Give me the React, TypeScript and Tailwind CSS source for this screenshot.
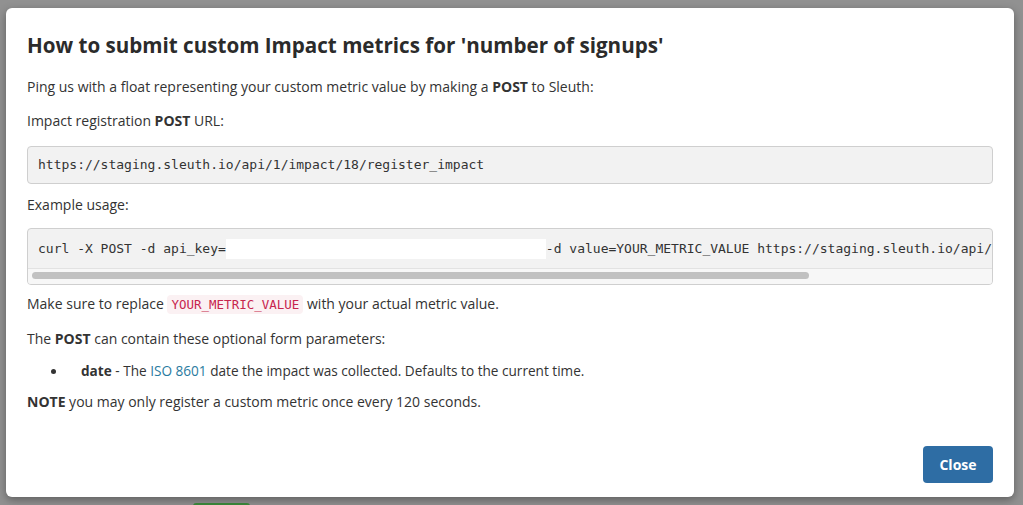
import React from "react";

export default function App() {
  const sans = { fontFamily: '"Open Sans", "Noto Sans", Arial, sans-serif' };
  return (
    <div className="relative h-[505px] w-[1023px] overflow-hidden bg-[#919191]" style={sans}>
      <div className="absolute left-[193px] top-[503px] h-[6px] w-[57px] rounded-t-[3px] bg-[#3d8b3d]" />
      <div className="absolute left-[6px] top-[8px] flex h-[489px] w-[1008px] flex-col rounded-[6px] bg-white px-[21px] text-[14px] text-[#333] shadow-[0_3px_8px_rgba(0,0,0,0.35)]">
        <h4 className="mt-[23px] text-[20.6px] font-bold leading-[28px] text-[#2b2b2b]">
          How to submit custom Impact metrics for 'number of signups'
        </h4>
        <p className="mt-[18px] leading-[20px]">
          Ping us with a float representing your custom metric value by making a <b>POST</b> to Sleuth:
        </p>
        <p className="mt-[14px] leading-[20px]">
          Impact registration <b>POST</b> URL:
        </p>
        <pre
          className="mt-[15px] rounded-[4px] border border-[#cfcfcf] bg-[#f2f2f2] px-[10px] py-[9px] text-[13px] leading-[18px] text-[#333]"
          style={{ fontFamily: '"DejaVu Sans Mono", "Liberation Mono", monospace' }}
        >
          https://staging.sleuth.io/api/1/impact/18/register_impact
        </pre>
        <p className="mt-[11px] leading-[20px]">Example usage:</p>
        <div className="mt-[13px] overflow-hidden rounded-[4px] border border-[#cfcfcf] bg-[#f2f2f2]">
          <pre
            className="overflow-hidden whitespace-pre px-[10px] pt-[10px] pb-[9px] text-[13px] leading-[18px] text-[#333]"
            style={{ fontFamily: '"DejaVu Sans Mono", "Liberation Mono", monospace' }}
          >
            curl -X POST -d api_key=<span className="inline-block h-[20px] w-[320px] bg-white align-middle" />-d value=YOUR_METRIC_VALUE https://staging.sleuth.io/api/1/impact/18/register_impact
          </pre>
          <div className="relative h-[16px] border-t border-[#e2e2e2] bg-[#f7f7f7]">
            <div className="absolute left-[4px] top-[3px] h-[7px] w-[777px] rounded-full bg-[#c1c1c1]" />
          </div>
        </div>
        <p className="mt-[9px] leading-[20px]">
          Make sure to replace{" "}
          <code
            className="rounded-[4px] bg-[#fbf1f3] px-[4px] py-[2px] text-[12.5px] text-[#c7254e]"
            style={{ fontFamily: '"DejaVu Sans Mono", "Liberation Mono", monospace' }}
          >
            YOUR_METRIC_VALUE
          </code>{" "}
          with your actual metric value.
        </p>
        <p className="mt-[14px] leading-[20px]">
          The <b>POST</b> can contain these optional form parameters:
        </p>
        <div className="mt-[12px] flex items-center pl-[24px] leading-[20px]">
          <span className="h-[5px] w-[5px] rounded-full bg-[#333]" />
          <span className="ml-[25px] text-[13.6px]">
            <b>date</b> - The <span className="text-[#2a7ba0]">ISO 8601</span> date the impact was collected. Defaults to the current time.
          </span>
        </div>
        <p className="mt-[11px] leading-[20px]">
          <b>NOTE</b> you may only register a custom metric once every 120 seconds.
        </p>
        <div className="mt-auto mb-[14px] flex justify-end">
          <button className="h-[37px] w-[70px] rounded-[4px] bg-[#2e6da4] text-[14px] font-bold text-white">
            Close
          </button>
        </div>
      </div>
    </div>
  );
}
